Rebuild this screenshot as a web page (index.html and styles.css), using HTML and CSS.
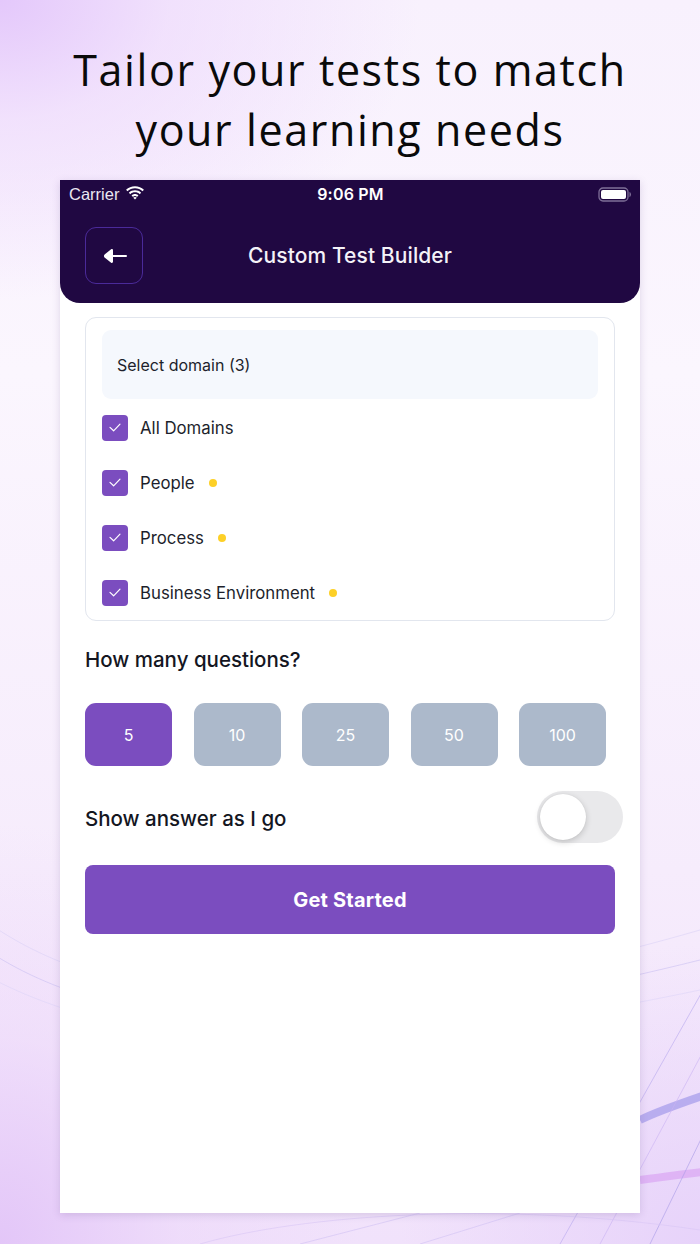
FILE: index.html
```html
<!DOCTYPE html>
<html lang="en">
<head>
<meta charset="utf-8">
<title>Custom Test Builder</title>
<link rel="stylesheet" href="styles.css">
</head>
<body>
<div class="page">
  <svg class="bg-lines" width="700" height="1244" viewBox="0 0 700 1244" aria-hidden="true">
    <g fill="none" stroke-width="1">
      <path d="M-40 930 C 80 1030, 300 1060, 700 960" stroke="#c9c0f2" opacity="0.6"/>
      <path d="M-40 900 C 80 1010, 320 1040, 700 930" stroke="#d6cdf5" opacity="0.5"/>
      <path d="M-40 960 C 100 1050, 320 1070, 700 990" stroke="#d9d2f7" opacity="0.5"/>
      <path d="M640 1120 C 660 1110, 690 1100, 720 1090" stroke="#8e86e6" stroke-width="8" opacity="0.55"/>
      <path d="M640 1180 C 670 1176, 700 1172, 720 1170" stroke="#d79cf2" stroke-width="8" opacity="0.6"/>
      <path d="M560 1244 L 720 960" stroke="#b7a8ef" opacity="0.6"/>
      <path d="M600 1244 L 720 1020" stroke="#c9b2f3" opacity="0.6"/>
      <path d="M650 1244 L 720 1100" stroke="#a99be8" opacity="0.6"/>
      <path d="M200 1244 C 300 1215, 500 1200, 700 1230" stroke="#d8c7f5" opacity="0.6"/>
      <path d="M300 1244 L 420 1213" stroke="#d1c2f4" opacity="0.6"/>
      <path d="M420 1244 L 520 1213" stroke="#d1c2f4" opacity="0.6"/>
    </g>
  </svg>

  <h1 class="headline">Tailor your tests to match<br>your learning needs</h1>

  <div class="phone">
    <header class="topbar">
      <div class="status">
        <div class="status-left">
          <span>Carrier</span>
          <svg class="wifi" width="20" height="14" viewBox="0 0 18 13">
            <path d="M9 2.2c2.7 0 5.1 1 7 2.7l1.3-1.4C15.1 1.5 12.2.3 9 .3S2.9 1.5.7 3.5L2 4.9c1.9-1.7 4.3-2.7 7-2.7z" fill="#fff"/>
            <path d="M9 5.9c1.7 0 3.2.6 4.4 1.7l1.3-1.4C13.2 4.8 11.2 4 9 4S4.8 4.8 3.3 6.2l1.3 1.4C5.8 6.5 7.3 5.9 9 5.9z" fill="#fff"/>
            <path d="M9 9.4c.8 0 1.4.3 1.9.7L12.2 8.7C11.4 7.9 10.2 7.4 9 7.4s-2.4.5-3.2 1.3l1.3 1.4c.5-.4 1.1-.7 1.9-.7z" fill="#fff"/>
            <path d="M9 12.6l1.6-1.7c-.4-.4-1-.6-1.6-.6s-1.2.2-1.6.6z" fill="#fff"/>
          </svg>
        </div>
        <div class="status-time">9:06 PM</div>
        <div class="status-right">
          <svg width="34" height="15" viewBox="0 0 34 15">
            <rect x="1" y="1" width="29" height="13" rx="4" fill="none" stroke="#7e6f98" stroke-width="1.3"/>
            <rect x="3" y="3" width="25" height="9" rx="2" fill="#fff"/>
            <path d="M31.5 5v5c.9-.3 1.5-1.3 1.5-2.5S32.4 5.3 31.5 5z" fill="#7e6f98"/>
          </svg>
        </div>
      </div>
      <div class="navrow">
        <button class="back" aria-label="Back">
          <svg width="26" height="16" viewBox="0 0 26 16">
            <path d="M10 8h14" stroke="#fff" stroke-width="2" stroke-linecap="round"/>
            <path d="M11 2.2c0-1-1.1-1.5-1.9-.9L2.6 6.4c-.9.8-.9 2.3 0 3.1l6.5 5.2c.8.6 1.9.1 1.9-.9z" fill="#fff"/>
          </svg>
        </button>
        <div class="title">Custom Test Builder</div>
        <div class="nav-spacer"></div>
      </div>
    </header>

    <main class="content">
      <section class="card">
        <div class="select">Select domain (3)</div>
        <ul class="domains">
          <li class="domain"><span class="check"><svg width="12" height="9" viewBox="0 0 12 9"><path d="M1 4.4l3.6 3.4L11 1.2" fill="none" stroke="#fff" stroke-width="1.2" stroke-linecap="round" stroke-linejoin="round"/></svg></span><span class="dlabel">All Domains</span></li>
          <li class="domain"><span class="check"><svg width="12" height="9" viewBox="0 0 12 9"><path d="M1 4.4l3.6 3.4L11 1.2" fill="none" stroke="#fff" stroke-width="1.2" stroke-linecap="round" stroke-linejoin="round"/></svg></span><span class="dlabel">People</span><span class="dot"></span></li>
          <li class="domain"><span class="check"><svg width="12" height="9" viewBox="0 0 12 9"><path d="M1 4.4l3.6 3.4L11 1.2" fill="none" stroke="#fff" stroke-width="1.2" stroke-linecap="round" stroke-linejoin="round"/></svg></span><span class="dlabel">Process</span><span class="dot"></span></li>
          <li class="domain"><span class="check"><svg width="12" height="9" viewBox="0 0 12 9"><path d="M1 4.4l3.6 3.4L11 1.2" fill="none" stroke="#fff" stroke-width="1.2" stroke-linecap="round" stroke-linejoin="round"/></svg></span><span class="dlabel">Business Environment</span><span class="dot"></span></li>
        </ul>
      </section>

      <h2 class="qtitle">How many questions?</h2>
      <div class="counts">
        <button class="count active">5</button>
        <button class="count">10</button>
        <button class="count">25</button>
        <button class="count">50</button>
        <button class="count">100</button>
      </div>

      <div class="toggle-row">
        <span class="toggle-label">Show answer as I go</span>
        <span class="toggle"><span class="knob"></span></span>
      </div>

      <button class="start">Get Started</button>
    </main>
  </div>
</div>
</body>
</html>
```

FILE: styles.css
```css
* { box-sizing: border-box; }

html, body {
  margin: 0;
  padding: 0;
}

body {
  width: 700px;
  height: 1244px;
  overflow: hidden;
  font-family: Inter, "Noto Sans", sans-serif;
}

.page {
  position: relative;
  width: 700px;
  height: 1244px;
  overflow: hidden;
  background:
    radial-gradient(ellipse 420px 300px at 0px 0px, #e4c8fb 0%, rgba(236,214,252,0.6) 40%, rgba(248,240,253,0) 100%),
    radial-gradient(ellipse 360px 420px at 0px 1244px, #e3c6f8 0%, rgba(236,214,250,0.5) 50%, rgba(248,240,253,0) 100%),
    radial-gradient(ellipse 300px 300px at 700px 1244px, #e7d3fa 0%, rgba(244,234,252,0) 100%),
    linear-gradient(180deg, #f8f1fd 0%, #fbf6fe 30%, #f6ecfc 70%, #f1e2fb 100%);
  display: flex;
  flex-direction: column;
  align-items: center;
}

.bg-lines {
  position: absolute;
  left: 0;
  top: 0;
}

.headline {
  position: relative;
  margin: 40px 0 0;
  font-family: "Open Sans", "Noto Sans", sans-serif;
  font-weight: 400;
  font-size: 43px;
  line-height: 60px;
  letter-spacing: 1.6px;
  color: #0a0a0a;
  text-align: center;
}

.phone {
  position: relative;
  margin-top: 20px;
  width: 580px;
  height: 1033px;
  background: #fff;
  box-shadow: 0 2px 8px rgba(90, 60, 130, 0.18);
}

.topbar {
  height: 123px;
  background: #200842;
  border-radius: 0 0 20px 20px;
  color: #fff;
}

.status {
  height: 28px;
  padding: 0 8px 0 9px;
  display: grid;
  grid-template-columns: 1fr auto 1fr;
  align-items: center;
  font-family: "Liberation Sans", Arial, sans-serif;
  font-size: 16.5px;
}

.status-left {
  display: flex;
  align-items: center;
  gap: 6px;
  color: #ebe7f1;
}

.wifi { margin-top: -3px; }

.status-time {
  font-family: Inter, "Noto Sans", sans-serif;
  font-weight: 600;
  font-size: 16px;
  letter-spacing: 0.2px;
}

.status-right {
  display: flex;
  justify-content: flex-end;
  padding-top: 1px;
}

.navrow {
  display: flex;
  align-items: center;
  padding: 19px 25px 0;
}

.back {
  width: 58px;
  height: 57px;
  border: 1.5px solid #4a2a99;
  border-radius: 11px;
  background: transparent;
  padding: 0;
  display: flex;
  align-items: center;
  justify-content: center;
}

.back svg { margin-left: 2px; }

.title {
  flex: 1;
  text-align: center;
  font-size: 21px;
  font-weight: 500;
  letter-spacing: 0.1px;
  color: #f4f2f8;
}

.nav-spacer { width: 58px; }

.content {
  padding: 14px 25px 0;
  display: flex;
  flex-direction: column;
}

.card {
  border: 1px solid #e2e6ee;
  border-radius: 11px;
  padding: 12px 16px 0;
}

.select {
  height: 69px;
  background: #f5f8fd;
  border-radius: 9px;
  display: flex;
  align-items: center;
  padding-left: 15px;
  font-size: 16px;
  color: #1d1f2c;
}

.domains {
  list-style: none;
  margin: 1px 0 0;
  padding: 0;
}

.domain {
  height: 55px;
  display: flex;
  align-items: center;
}

.check {
  width: 26px;
  height: 26px;
  border-radius: 4px;
  background: #7b4dbf;
  display: flex;
  align-items: center;
  justify-content: center;
}

.dlabel {
  margin-left: 12px;
  font-size: 16.8px;
  color: #1d1f2c;
  letter-spacing: 0;
}

.dot {
  width: 8px;
  height: 8px;
  border-radius: 50%;
  background: #fdd027;
  margin-left: 14px;
}

.qtitle {
  margin: 27px 0 0;
  font-size: 20.5px;
  font-weight: 500;
  line-height: 24px;
  color: #14161f;
  letter-spacing: 0;
}

.counts {
  margin-top: 31px;
  display: flex;
  gap: 21.5px;
}

.count {
  width: 87px;
  height: 63px;
  border: none;
  border-radius: 11px;
  background: #acb9cb;
  color: #fff;
  font-family: Inter, "Noto Sans", sans-serif;
  font-size: 16px;
  padding: 0;
}

.count.active { background: #7b4dbf; }

.toggle-row {
  margin-top: 25px;
  margin-right: -8px;
  height: 52px;
  display: flex;
  align-items: center;
  justify-content: space-between;
}

.toggle-label {
  font-size: 20.5px;
  font-weight: 500;
  color: #14161f;
  letter-spacing: 0;
  padding-top: 2px;
}

.toggle {
  width: 86px;
  height: 52px;
  border-radius: 26px;
  background: #e9e9eb;
  padding: 3px;
  display: flex;
}

.knob {
  width: 46px;
  height: 46px;
  border-radius: 50%;
  background: #fff;
  box-shadow: 0 2px 6px rgba(0, 0, 0, 0.18), 0 0 1px rgba(0,0,0,0.1);
}

.start {
  margin-top: 22px;
  height: 69px;
  border: none;
  border-radius: 8px;
  background: #7b4dbf;
  color: #fff;
  font-family: Inter, "Noto Sans", sans-serif;
  font-size: 20px;
  font-weight: 700;
  letter-spacing: 0.2px;
}
```
